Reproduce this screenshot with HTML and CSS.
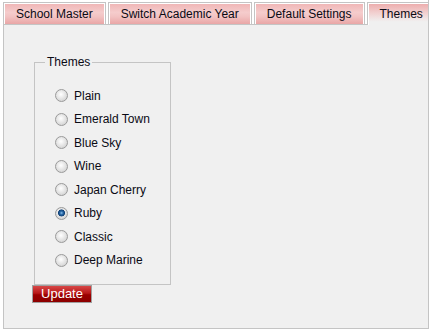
FILE: index.html
```html
<!DOCTYPE html>
<html lang="en">
<head>
  <meta charset="utf-8">
  <title>Settings - Themes</title>
  <link rel="stylesheet" href="styles.css">
</head>
<body>

<div class="tabBox">
  <!-- tab strip -->
  <ul class="tabs">
    <li class="tab">School Master</li>
    <li class="tab">Switch Academic Year</li>
    <li class="tab">Default Settings</li>
    <li class="tab active">Themes</li>
  </ul>

  <!-- themes panel -->
  <div class="panel">
    <fieldset class="themeSet">
      <legend>Themes</legend>
      <label class="themeRow"><input type="radio" name="theme" value="plain"> Plain</label>
      <label class="themeRow"><input type="radio" name="theme" value="emerald"> Emerald Town</label>
      <label class="themeRow"><input type="radio" name="theme" value="bluesky"> Blue Sky</label>
      <label class="themeRow"><input type="radio" name="theme" value="wine"> Wine</label>
      <label class="themeRow"><input type="radio" name="theme" value="japan"> Japan Cherry</label>
      <label class="themeRow"><input type="radio" name="theme" value="ruby" checked> Ruby</label>
      <label class="themeRow"><input type="radio" name="theme" value="classic"> Classic</label>
      <label class="themeRow"><input type="radio" name="theme" value="marine"> Deep Marine</label>
    </fieldset>
    <button class="updateBtn">Update</button>
  </div>
</div>

</body>
</html>
```

FILE: styles.css
```css
/* base */
body {
  margin: 0;
  background-color: #fff;
  font-family: "Liberation Sans", Arial, sans-serif;
  font-size: 12px;
  color: #0a0a14;
}

.tabBox {
  width: 425px;
  margin-left: 3px;
  padding-top: 2px;
  border-right: 1px solid #c4c4c4;
  overflow: hidden;
}

/* tabs */
.tabs {
  display: flex;
  gap: 2px;
  margin: 0;
  padding: 0;
  list-style: none;
  white-space: nowrap;
}

.tab {
  flex: none;
  height: 21px;
  line-height: 23px;
  padding: 0 12px;
  border: 1px solid #c4c4c4;
  border-bottom: none;
  background: linear-gradient(#efb4b4, #f5cccc 45%, #f2c2c2 65%, #e9a6a6);
  box-shadow: inset 1px 1px 0 #fff, inset -1px 0 0 #fff;
}

.tab.active {
  position: relative;
  z-index: 1;
  height: 22px;
  margin-bottom: -1px;
  background: linear-gradient(#ecaaaa, #f2d0d0 45%, #f0f0f0 85%);
}

/* panel */
.panel {
  height: 273px;
  padding: 30px 0 0 28px;
  border-top: 1px solid #c4c4c4;
  border-left: 1px solid #c4c4c4;
  border-bottom: 1px solid #c4c4c4;
  background-color: #f0f0f0;
}

.themeSet {
  width: 125px;
  margin: 0 0 0 2px;
  padding: 15px 0 12px 10px;
  border: 1px solid #c4c4c4;
}

.themeSet legend {
  padding: 0 2px;
  line-height: 14px;
}

.themeRow {
  display: flex;
  align-items: center;
  height: 23.5px;
  margin-left: 10px;
}

/* radio like the windows one */
.themeRow input {
  appearance: none;
  -webkit-appearance: none;
  width: 13px;
  height: 13px;
  margin: 0 6px 0 0;
  border: 1px solid #9a9a9a;
  border-radius: 50%;
  background: radial-gradient(circle at 45% 40%, #fff 0, #e6e6e6 45%, #c8c8c8 100%);
}

.themeRow input:checked {
  background:
    radial-gradient(circle at 50% 45%, #8fc0ea 0, #2a6aa8 1.6px, #0f3f74 3.2px, transparent 3.8px),
    radial-gradient(circle at 45% 40%, #fff 0, #e6e6e6 45%, #c8c8c8 100%);
}

/* update button */
.updateBtn {
  display: block;
  width: 60px;
  height: 18px;
  padding: 0;
  border: 1px solid #a0a0a0;
  background: linear-gradient(#d84848, #b81818 45%, #9a0000 55%, #8c0000);
  color: #fff;
  font-family: "Liberation Sans", Arial, sans-serif;
  font-size: 13px;
  line-height: 16px;
  cursor: pointer;
}
```
